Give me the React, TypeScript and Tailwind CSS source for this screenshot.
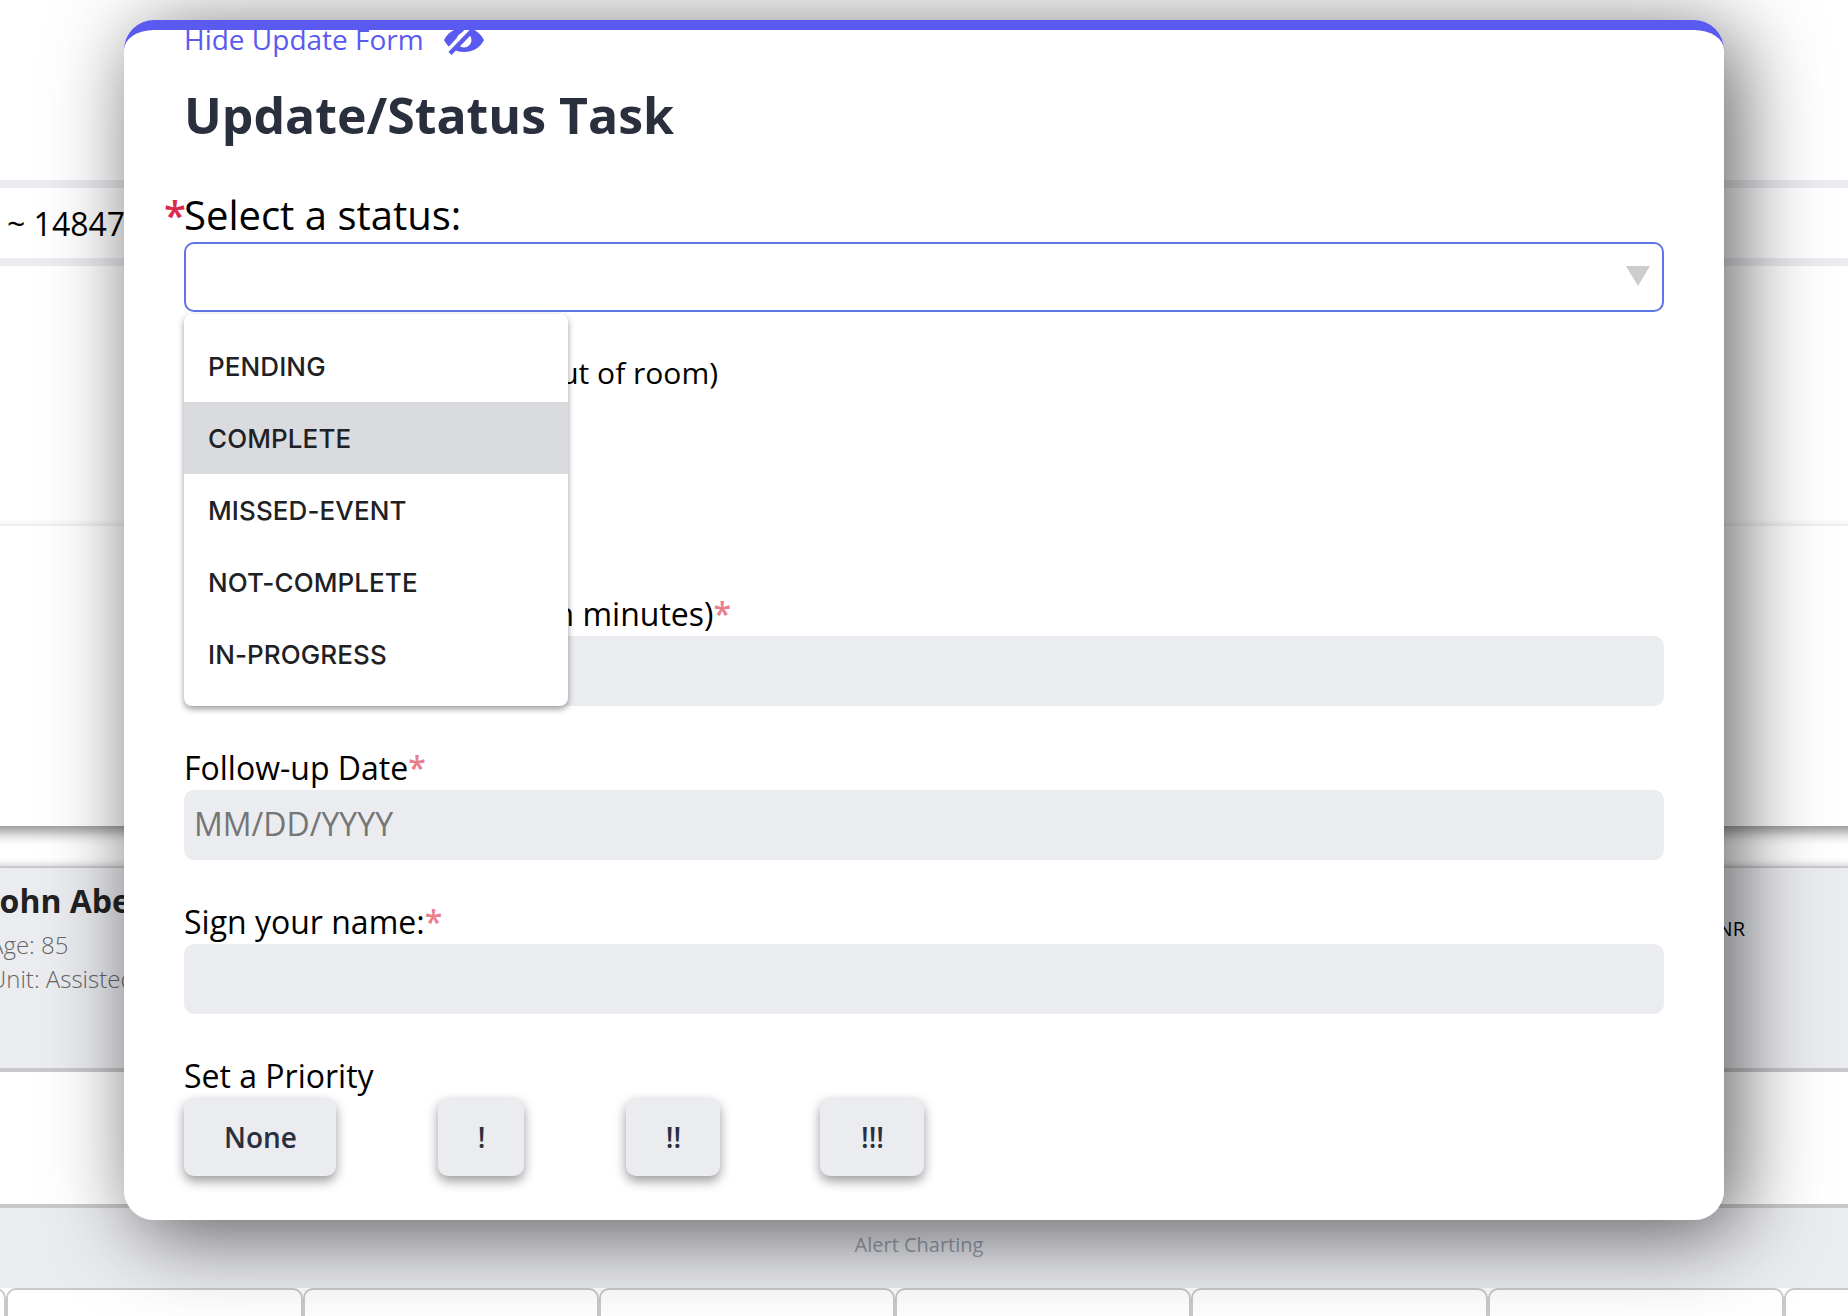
import React from "react";

const statuses = ["PENDING", "COMPLETE", "MISSED-EVENT", "NOT-COMPLETE", "IN-PROGRESS"];

const priorities = [
  { label: "None", box: "w-[152px]" },
  { label: "!", box: "ml-[102px] w-[86px]" },
  { label: "!!", box: "ml-[102px] w-[94px]" },
  { label: "!!!", box: "ml-[100px] w-[104px]" },
];

function Required() {
  return <span className="font-semibold text-[#e97f8c]">*</span>;
}

function EyeOff() {
  return (
    <svg viewBox="0 0 40 40" className="h-10 w-10" fill="currentColor">
      <path
        fillRule="evenodd"
        d="M0 20C4 12 11 8 20 8S36 12 40 20C36 28 29 32 20 32S4 28 0 20ZM20 12.500A7.500 7.500 0 1 0 20 27.500A7.500 7.500 0 1 0 20 12.500Z"
      />
      <path d="M2.500 34.500L31.500 3.500" stroke="#fff" strokeWidth="7.500" />
      <path d="M6 33.500L33 5.500" stroke="currentColor" strokeWidth="4.400" />
    </svg>
  );
}

function Backdrop() {
  return (
    <div className="flex h-full flex-col">
      <div className="h-[180px] shrink-0" />
      <div className="flex h-[86px] shrink-0 items-center border-y-8 border-[#ebecf0] pl-[7px] text-[32px] leading-[70px] text-black">
        <span className="whitespace-pre pt-[2px]">~ 14847</span>
      </div>
      <div className="h-[260px] shrink-0 shadow-[inset_0_-7px_7px_-6px_rgba(0,0,0,0.12)]" />
      <div className="h-[300px] shrink-0" />
      <div className="relative h-10 shrink-0 overflow-hidden shadow-[inset_0_-8px_8px_-8px_rgba(0,0,0,0.25)]">
        <div className="absolute -left-10 -right-10 -top-10 h-10 shadow-[0_6px_14px_rgba(0,0,0,0.45)]" />
      </div>
      <div className="flex h-[206px] shrink-0 justify-between border-b-4 border-t-2 border-[#c9c9c9] bg-[#ebecf0]">
        <div className="-ml-[11px] whitespace-nowrap pt-[11px]">
          <div className="text-[32px] font-bold leading-[44px] text-[#222]">John Abernathy</div>
          <div className="pt-[5px] text-[24px] font-light leading-[34px] text-[#666]">
            <div>Age: 85</div>
            <div>Unit: Assisted Living</div>
          </div>
        </div>
        <div className="pr-[103px] pt-[47px] text-[20px] leading-[28px] text-black">DNR</div>
      </div>
      <div className="h-[132px] shrink-0" />
      <div className="flex h-[84px] shrink-0 justify-center border-t-4 border-[#c9c9c9] bg-[#ebecf0] pt-[23px]">
        <span className="-ml-[10px] text-[20px] leading-[28px] text-[#9ba1b0]">Alert Charting</span>
      </div>
      <div className="-ml-[290px] flex w-[2370px] shrink-0">
        {Array.from({ length: 8 }, (_, i) => (
          <div key={i} className="h-[60px] flex-1 rounded-t-[10px] border-2 border-[#c9c9c9]" />
        ))}
      </div>
    </div>
  );
}

function StatusMenu() {
  return (
    <ul className="absolute left-0 top-[72px] z-20 w-[384px] rounded-lg bg-white py-4 font-['Inter',sans-serif] text-[26px] font-medium tracking-[0.1px] text-[#202124] shadow-[0_3px_6px_rgba(0,0,0,0.4)]">
      {statuses.map((s) => (
        <li
          key={s}
          className={
            s === "COMPLETE"
              ? "h-[72px] bg-[#dadbdf] px-6 leading-[74px]"
              : "h-[72px] px-6 leading-[74px]"
          }
        >
          {s}
        </li>
      ))}
    </ul>
  );
}

export default function App() {
  return (
    <div className="relative h-[1316px] w-[1848px] overflow-hidden bg-white font-['Open_Sans',sans-serif]">
      <Backdrop />
      <div className="absolute left-[124px] top-5 z-30 h-[1200px] w-[1600px] rounded-[30px] shadow-[13px_13px_84px_rgba(0,0,0,0.63)]">
        <div className="h-full overflow-hidden rounded-[30px] border-t-[10px] border-[#5a5af0] bg-white px-[60px]">
          <div className="-mt-[11px] flex h-10 items-center text-[28px] leading-10 text-[#5a5af0]">
            <span>Hide Update Form</span>
            <span className="ml-[20px] mt-[2px]">
              <EyeOff />
            </span>
          </div>
          <h1 className="mt-[26px] text-[50px] font-bold leading-[60px] text-[#2a2f3e]">Update/Status Task</h1>
          <div className="mt-[41px] h-14 text-[40px] leading-[58px] text-black">
            <span className="-ml-5 inline-block w-5 font-semibold text-[#dc2a4a]">*</span>Select a status:
          </div>
          <div className="relative h-[70px] rounded-[10px] border-2 border-[#5e75e5]">
            <div className="flex h-full items-center justify-end pr-3">
              <svg viewBox="0 0 24 20" className="-mt-[2px] h-5 w-6" fill="#ccc">
                <path d="M0 0H24L12 20Z" />
              </svg>
            </div>
            <div className="absolute -left-[2px] -top-[2px]">
              <StatusMenu />
            </div>
          </div>
          <div className="mt-[41px] w-[534px] text-right text-[30px] leading-10 text-black">(out of room)</div>
          <div className="mt-[199px] h-11 w-[547px] text-right text-[32px] leading-[44px] text-black">
            (in minutes)<Required />
          </div>
          <div className="h-[70px] rounded-[10px] bg-[#ebecf0]" />
          <div className="mt-10 h-11 text-[32px] leading-[44px] text-black">
            Follow-up Date<Required />
          </div>
          <div className="h-[70px] rounded-[10px] bg-[#ebecf0] px-[10px] text-[32px] leading-[68px] text-[#757575]">
            MM/DD/YYYY
          </div>
          <div className="mt-10 h-11 text-[32px] leading-[44px] text-black">
            Sign your name:<Required />
          </div>
          <div className="h-[70px] rounded-[10px] bg-[#ebecf0]" />
          <div className="mt-10 h-11 text-[32px] leading-[44px] text-black">Set a Priority</div>
          <div className="flex">
            {priorities.map((p) => (
              <button
                key={p.label}
                className={`${p.box} h-[78px] rounded-[10px] bg-[#ebecf0] pl-px text-[28px] font-semibold leading-[78px] text-[#2a2f3e] shadow-[0_5px_12px_rgba(0,0,0,0.4)]`}
              >
                {p.label}
              </button>
            ))}
          </div>
        </div>
      </div>
    </div>
  );
}
